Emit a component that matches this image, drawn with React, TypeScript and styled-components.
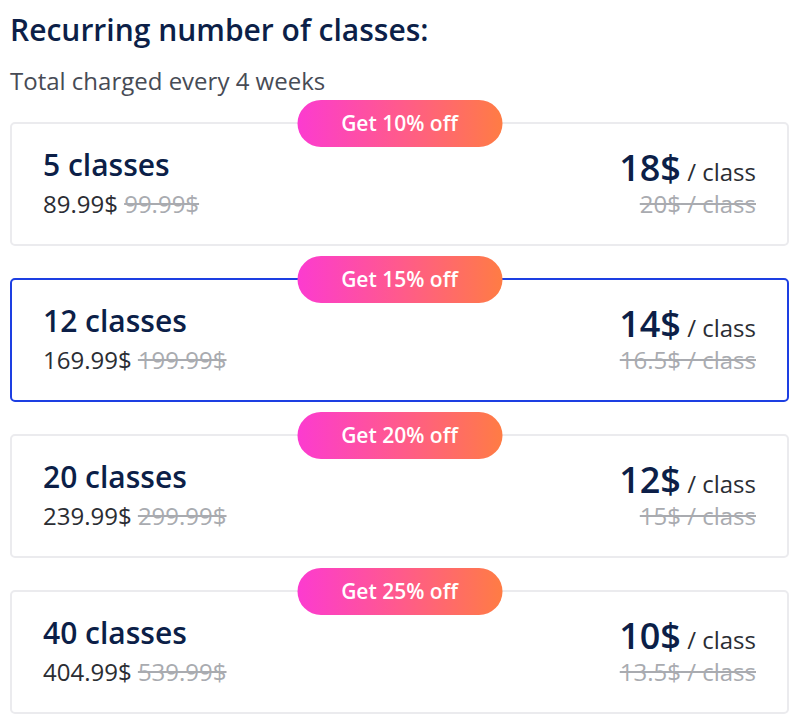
import React from 'react';
import styled, { createGlobalStyle } from 'styled-components';

interface Plan {
  classes: number;
  total: string;
  oldTotal: string;
  perClass: string;
  oldPerClass: string;
  discount: number;
}

const plans: Plan[] = [
  { classes: 5, total: '89.99$', oldTotal: '99.99$', perClass: '18$', oldPerClass: '20$', discount: 10 },
  { classes: 12, total: '169.99$', oldTotal: '199.99$', perClass: '14$', oldPerClass: '16.5$', discount: 15 },
  { classes: 20, total: '239.99$', oldTotal: '299.99$', perClass: '12$', oldPerClass: '15$', discount: 20 },
  { classes: 40, total: '404.99$', oldTotal: '539.99$', perClass: '10$', oldPerClass: '13.5$', discount: 25 },
];

const GlobalStyle = createGlobalStyle`
  * {
    box-sizing: border-box;
  }

  body {
    margin: 0;
    background: #ffffff;
    font-family: 'Open Sans', 'Noto Sans', sans-serif;
  }
`;

export default function App() {
  const selected = 12;

  return (
    <>
      <GlobalStyle />
      <Page>
        <Title>Recurring number of classes:</Title>
        <Subtitle>Total charged every 4 weeks</Subtitle>
        <PlanList>
          {plans.map((plan) => (
            <PlanCard key={plan.classes} selected={plan.classes === selected}>
              <DiscountBadge>Get {plan.discount}% off</DiscountBadge>
              <PlanInfo>
                <PlanName>{plan.classes} classes</PlanName>
                <TotalLine>
                  {plan.total} <OldPrice>{plan.oldTotal}</OldPrice>
                </TotalLine>
              </PlanInfo>
              <PriceInfo>
                <PerClass>
                  <PerClassAmount>{plan.perClass}</PerClassAmount> / class
                </PerClass>
                <OldPrice>{plan.oldPerClass} / class</OldPrice>
              </PriceInfo>
            </PlanCard>
          ))}
        </PlanList>
      </Page>
    </>
  );
}

const Page = styled.div({
  padding: '10px 10px 10px 10px',
  width: 799,
});

const Title = styled.h1({
  margin: 0,
  fontSize: '30px',
  lineHeight: '40px',
  fontWeight: 600,
  color: '#0c1f48',
});

const Subtitle = styled.div({
  marginTop: 15,
  fontSize: '24px',
  lineHeight: '32px',
  color: '#474b55',
});

const PlanList = styled.div({
  display: 'flex',
  flexDirection: 'column',
  gap: 32,
  marginTop: 25,
});

const PlanCard = styled.div<{ selected: boolean }>(({ selected }) => {
  return {
    position: 'relative',
    display: 'flex',
    flexDirection: 'row',
    alignItems: 'flex-start',
    justifyContent: 'space-between',
    height: 124,
    paddingLeft: 31,
    paddingRight: 31,
    paddingTop: 21,
    borderRadius: 5,
    border: selected ? '2px solid #1d3fe2' : '2px solid #ebebee',
    background: '#ffffff',
  };
});

const DiscountBadge = styled.div({
  position: 'absolute',
  left: '50%',
  top: -24,
  transform: 'translateX(-50%)',
  width: 205,
  height: 47,
  borderRadius: 24,
  background: 'linear-gradient(90deg, #fc3bd0 0%, #ff5a8c 50%, #ff7c44 100%)',
  color: '#ffffff',
  fontSize: '21px',
  fontWeight: 600,
  lineHeight: '47px',
  textAlign: 'center',
});

const PlanInfo = styled.div({
  display: 'flex',
  flexDirection: 'column',
  gap: 3,
});

const PlanName = styled.div({
  fontSize: '30px',
  lineHeight: '40px',
  fontWeight: 600,
  color: '#0c1f48',
});

const TotalLine = styled.div({
  fontSize: '24px',
  lineHeight: '32px',
  color: '#2b2d33',
});

const OldPrice = styled.span({
  fontSize: '24px',
  lineHeight: '32px',
  color: '#a9abb0',
  textDecoration: 'line-through',
});

const PriceInfo = styled.div({
  display: 'flex',
  flexDirection: 'column',
  alignItems: 'flex-end',
  gap: 2,
});

const PerClass = styled.div({
  marginTop: 5,
  fontSize: '24px',
  lineHeight: 1,
  color: '#2b2d33',
});

const PerClassAmount = styled.span({
  fontSize: '36px',
  lineHeight: 1,
  fontWeight: 600,
  color: '#0c1f48',
});
